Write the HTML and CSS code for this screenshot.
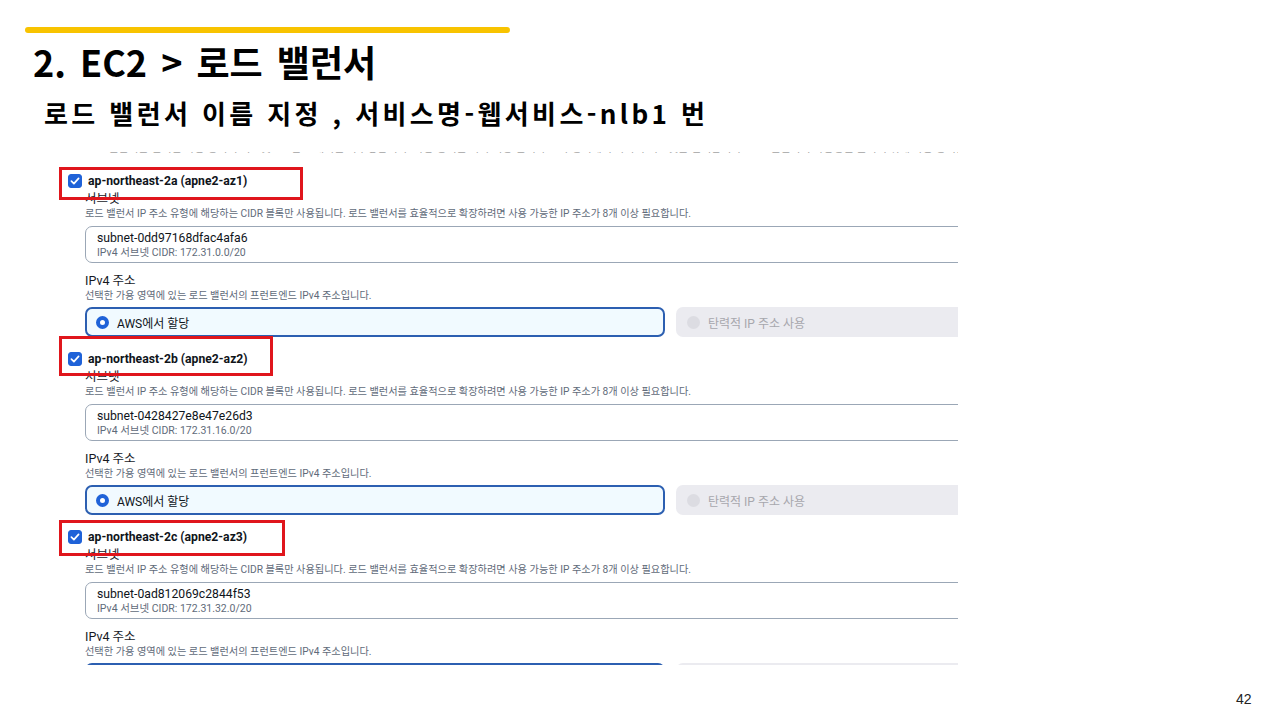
FILE: index.html
```html
<!DOCTYPE html>
<html lang="ko">
<head>
<meta charset="utf-8">
<title>EC2 로드 밸런서</title>
<link rel="stylesheet" href="styles.css">
</head>
<body>
<div class="slide">
  <div class="accent-bar"></div>
  <h1 class="title">2. EC2 &gt; 로드 밸런서</h1>
  <h2 class="subtitle">로드 밸런서 이름 지정 , 서비스명-웹서비스-nlb1 번</h2>

  <div class="shot">
    <div class="cutline"><span>로드 밸런서는 선택한 가용 영역의 서브넷으로만 트래픽을 라우팅합니다. 가용 영역을 하나 이상 선택하고 각 영역에서 하나의 서브넷을 선택합니다. 로드 밸런서의 가용성을 높이기 위해 가용 영역을 선택합니다.</span></div>

    <div class="az">
      <div class="hl hl-a"></div>
      <div class="az-row"><span class="check"><svg viewBox="0 0 14 14" width="14" height="14"><rect x="0.5" y="0.5" width="13" height="13" rx="2.5" fill="#1f62d8" stroke="#1f62d8"/><path d="M3.4 7.2 L5.9 9.6 L10.6 4.4" fill="none" stroke="#fff" stroke-width="1.7" stroke-linecap="round" stroke-linejoin="round"/></svg></span><span class="az-name">ap-northeast-2a (apne2-az1)</span></div>
      <div class="field-label">서브넷</div>
      <div class="field-desc">로드 밸런서 IP 주소 유형에 해당하는 CIDR 블록만 사용됩니다. 로드 밸런서를 효율적으로 확장하려면 사용 가능한 IP 주소가 8개 이상 필요합니다.</div>
      <div class="select">
        <div class="select-main">subnet-0dd97168dfac4afa6</div>
        <div class="select-sub">IPv4 서브넷 CIDR: 172.31.0.0/20</div>
      </div>
      <div class="field-label gap">IPv4 주소</div>
      <div class="field-desc tight">선택한 가용 영역에 있는 로드 밸런서의 프런트엔드 IPv4 주소입니다.</div>
      <div class="tiles">
        <div class="tile tile-on"><span class="radio"></span>AWS에서 할당</div>
        <div class="tile tile-off"><span class="radio"></span>탄력적 IP 주소 사용</div>
      </div>
    </div>

    <div class="az">
      <div class="hl hl-b"></div>
      <div class="az-row"><span class="check"><svg viewBox="0 0 14 14" width="14" height="14"><rect x="0.5" y="0.5" width="13" height="13" rx="2.5" fill="#1f62d8" stroke="#1f62d8"/><path d="M3.4 7.2 L5.9 9.6 L10.6 4.4" fill="none" stroke="#fff" stroke-width="1.7" stroke-linecap="round" stroke-linejoin="round"/></svg></span><span class="az-name">ap-northeast-2b (apne2-az2)</span></div>
      <div class="field-label">서브넷</div>
      <div class="field-desc">로드 밸런서 IP 주소 유형에 해당하는 CIDR 블록만 사용됩니다. 로드 밸런서를 효율적으로 확장하려면 사용 가능한 IP 주소가 8개 이상 필요합니다.</div>
      <div class="select">
        <div class="select-main">subnet-0428427e8e47e26d3</div>
        <div class="select-sub">IPv4 서브넷 CIDR: 172.31.16.0/20</div>
      </div>
      <div class="field-label gap">IPv4 주소</div>
      <div class="field-desc tight">선택한 가용 영역에 있는 로드 밸런서의 프런트엔드 IPv4 주소입니다.</div>
      <div class="tiles">
        <div class="tile tile-on"><span class="radio"></span>AWS에서 할당</div>
        <div class="tile tile-off"><span class="radio"></span>탄력적 IP 주소 사용</div>
      </div>
    </div>

    <div class="az">
      <div class="hl hl-c"></div>
      <div class="az-row"><span class="check"><svg viewBox="0 0 14 14" width="14" height="14"><rect x="0.5" y="0.5" width="13" height="13" rx="2.5" fill="#1f62d8" stroke="#1f62d8"/><path d="M3.4 7.2 L5.9 9.6 L10.6 4.4" fill="none" stroke="#fff" stroke-width="1.7" stroke-linecap="round" stroke-linejoin="round"/></svg></span><span class="az-name">ap-northeast-2c (apne2-az3)</span></div>
      <div class="field-label">서브넷</div>
      <div class="field-desc">로드 밸런서 IP 주소 유형에 해당하는 CIDR 블록만 사용됩니다. 로드 밸런서를 효율적으로 확장하려면 사용 가능한 IP 주소가 8개 이상 필요합니다.</div>
      <div class="select">
        <div class="select-main">subnet-0ad812069c2844f53</div>
        <div class="select-sub">IPv4 서브넷 CIDR: 172.31.32.0/20</div>
      </div>
      <div class="field-label gap">IPv4 주소</div>
      <div class="field-desc tight">선택한 가용 영역에 있는 로드 밸런서의 프런트엔드 IPv4 주소입니다.</div>
      <div class="tiles">
        <div class="tile tile-on"><span class="radio"></span>AWS에서 할당</div>
        <div class="tile tile-off"><span class="radio"></span>탄력적 IP 주소 사용</div>
      </div>
    </div>
  </div>

  <div class="page-num">42</div>
</div>
</body>
</html>
```

FILE: styles.css
```css
* { box-sizing: border-box; }
html, body { margin: 0; padding: 0; background: #fff; }
body { width: 1280px; height: 720px; overflow: hidden; }

.slide {
  position: relative;
  width: 1280px;
  height: 720px;
  padding-top: 27px;
  font-family: "Noto Sans CJK KR", "Noto Sans", sans-serif;
  color: #000;
}

.accent-bar {
  margin-left: 25px;
  width: 485px;
  height: 6px;
  border-radius: 3px;
  background: #f8c300;
}

.title {
  margin: 4px 0 0 33px;
  font-size: 36px;
  font-weight: 700;
  line-height: 48px;
  word-spacing: 4px;
}

.subtitle {
  margin: 8px 0 0 44px;
  font-size: 26px;
  font-weight: 700;
  line-height: 40px;
  letter-spacing: 3.4px;
}

.shot {
  margin: 19px 0 0 57px;
  width: 901px;
  height: 513px;
  overflow: hidden;
  font-family: Roboto, "Noto Sans CJK KR", sans-serif;
  color: #16191f;
}

.cutline {
  height: 6px;
  overflow: hidden;
  margin-left: 28px;
  white-space: nowrap;
  font-size: 11px;
  line-height: 14px;
  color: #a3a3a3;
}
.cutline span { display: block; margin-top: -10px; }

.az {
  position: relative;
  margin-top: 12px;
  padding-left: 28px;
}
.az + .az { margin-top: 11px; }

.hl {
  position: absolute;
  left: 2px;
  border: 3px solid #e0161c;
  pointer-events: none;
}
.hl-a { top: -3px; width: 244px; height: 33px; }
.hl-b { top: -12px; width: 214px; height: 40px; }
.hl-c { top: -6px; width: 226px; height: 36px; }

.az-row {
  height: 22px;
  margin-left: -17px;
  display: flex;
  align-items: center;
  gap: 6px;
}
.check { display: flex; width: 14px; height: 14px; }
.az-name {
  font-size: 12.2px;
  font-weight: 700;
  color: #0f141a;
}

.field-label {
  font-size: 12.5px;
  line-height: 14px;
  color: #16191f;
}
.field-label.gap { margin-top: 10px; line-height: 16px; }

.field-desc {
  font-size: 10.2px;
  line-height: 16px;
  color: #5f6b7a;
  white-space: nowrap;
}
.field-desc.tight { line-height: 14px; }

.select {
  margin-top: 4px;
  width: 900px;
  height: 37px;
  border: 1px solid #9ba7b6;
  border-radius: 7px;
  padding: 3px 0 0 11px;
}
.select-main { font-size: 12.2px; line-height: 16px; color: #0f141a; }
.select-sub { font-size: 10.5px; line-height: 14px; color: #5f6b7a; }

.tiles {
  margin-top: 4px;
  display: flex;
  gap: 11px;
  height: 30px;
}
.tile {
  flex: none;
  height: 30px;
  border-radius: 7px;
  display: flex;
  align-items: center;
  gap: 8px;
  padding-left: 11px;
  font-size: 12px;
}
.tile-on {
  width: 580px;
  background: #f1faff;
  border: 2px solid #2c5fb1;
  color: #0f141a;
  padding-left: 9px;
}
.tile-off {
  width: 300px;
  background: #ebebf0;
  color: #a7a7ad;
}
.radio {
  width: 13px;
  height: 13px;
  border-radius: 50%;
  flex: none;
}
.tile-on .radio { border: 4px solid #1f62d8; background: #fff; }
.tile-off .radio { background: #dcdce2; }

.page-num {
  position: absolute;
  left: 1236px;
  top: 690px;
  font-family: "Liberation Sans", Arial, sans-serif;
  font-size: 14px;
  line-height: 18px;
  color: #222;
}
```
